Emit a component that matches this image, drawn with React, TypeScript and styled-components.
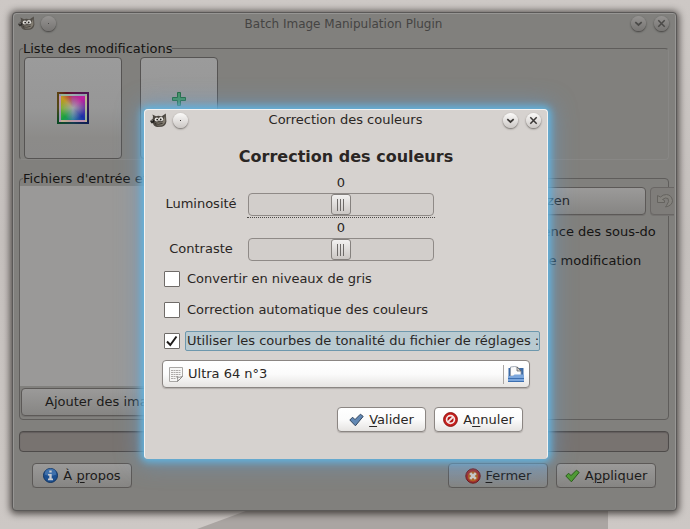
import React, { useState } from "react";
import styled, { createGlobalStyle, css } from "styled-components";

const GlobalStyle = createGlobalStyle`
  *, *::before, *::after { box-sizing: border-box; }
  body {
    margin: 0;
    font: 13px/16px "DejaVu Sans", Verdana, sans-serif;
    color: #2a2624;
  }
  button, input { font: inherit; color: inherit; }
`;

const Desktop = styled.div`
  position: relative;
  display: flex;
  min-height: 100vh;
  padding: 12px 13px 18px 12px;
  background: linear-gradient(#cdc8c5, #c5c0bd 45%, #cdc8c5);
  overflow: hidden;
`;

const Wallpaper = styled.svg`
  position: absolute;
  inset: auto 0 0 0;
  width: 100%;
  height: 24px;
`;

const MainWindow = styled.main`
  position: relative;
  flex: 1;
  min-width: 0;
  border: 1px solid #5b5958;
  border-radius: 4px;
  background: #81807d;
  color: #151413;
  box-shadow: inset 1px 1px 0 #979694, inset -1px 0 0 #979694, 0 1px 7px 2px rgba(40, 36, 34, 0.75);
`;

const TitleBar = styled.header<{ $dim?: boolean }>`
  display: flex;
  align-items: center;
  gap: 6px;
  height: 20px;
  padding: 0 6px 0 5px;
  ${(p) =>
    p.$dim &&
    css`
      height: 21px;
      padding-right: 7px;
      color: #454443;
    `}
`;

const WindowTitle = styled.h1<{ $small?: boolean }>`
  flex: 1;
  margin: 0;
  font-size: ${(p) => (p.$small ? 12 : 13)}px;
  font-weight: 400;
  line-height: 16px;
  text-align: center;
  white-space: nowrap;
`;

const RoundButton = styled.button<{ $dim?: boolean }>`
  display: grid;
  place-items: center;
  flex: none;
  width: 15px;
  height: 15px;
  padding: 0;
  border: 0;
  border-radius: 50%;
  color: ${(p) => (p.$dim ? "#4b4a48" : "#3b3836")};
  background: ${(p) => (p.$dim ? "linear-gradient(#959391, #777573)" : "linear-gradient(#fbfaf9, #ccc8c5)")};
  box-shadow: 0 1px 2px ${(p) => (p.$dim ? "#3f3d3c" : "#6d6966")};
`;

const WindowControls = styled.div`
  display: flex;
  gap: 8px;
`;

const WindowBody = styled.div`
  display: flex;
  flex-direction: column;
  margin-right: 2px;
  padding: 7px 5px 0 6px;
  overflow: hidden;
`;

const Frame = styled.fieldset<{ $faint?: boolean }>`
  min-width: 0;
  margin: 0 0 11px;
  padding: 0;
  border: 1px solid #5f5d5b;
  border-radius: 4px;
  ${(p) =>
    p.$faint &&
    css`
      padding: 1px 4px 0;
      border-right-color: #888785;
      border-bottom-color: #888785;
    `}
`;

const Legend = styled.legend<{ $inset?: boolean }>`
  margin-left: ${(p) => (p.$inset ? 3 : -1)}px;
  padding: 0;
  line-height: 15px;
  white-space: nowrap;
`;

const StepList = styled.div`
  display: flex;
  gap: 18px;
`;

const StepButton = styled.button<{ $narrow?: boolean }>`
  display: grid;
  place-items: center;
  width: ${(p) => (p.$narrow ? 78 : 98)}px;
  height: 102px;
  padding: ${(p) => (p.$narrow ? "0 0 18px" : "0")};
  border: 1px solid #565453;
  border-radius: 4px;
  background: linear-gradient(#9b9b9b, #979797 50%, #8c8b89 80%, #8b8a89);
`;

const Swatch = styled.span`
  display: block;
  width: 32px;
  height: 32px;
  padding: 2px;
  background: conic-gradient(#5c1040, #45175c, #101c55 37%, #143a4c 50%, #0b4a22 63%, #504818, #5c4310 87%, #5c1020, #5c1040);
`;

const SwatchField = styled.span`
  display: block;
  height: 28px;
  border: 2px solid rgba(190, 185, 182, 0.75);
  background:
    radial-gradient(circle, rgba(160, 162, 168, 1), rgba(155, 160, 165, 0) 70%),
    conic-gradient(#b0308a, #c020a0 12%, #6a3aa5 25%, #1830a8 37%, #3080a0 50%, #18a040 62%, #80b030 75%, #c09820 87%, #b84040 95%, #b0308a);
`;

const FilesGrid = styled.div`
  display: grid;
  grid-template-columns: minmax(0, 1fr) 196px;
`;

const FileColumn = styled.div`
  display: flex;
  flex-direction: column;
  gap: 2px;
  padding-bottom: 3px;
`;

const FileList = styled.div`
  height: 200px;
  background: #9a9998;
`;

const dimButton = css`
  border: 1px solid #5c5957;
  border-radius: 4px;
  background: linear-gradient(#9b9a99, #868583);
  box-shadow: 0 1px 0 #757371;
  color: #1c1b1a;
  white-space: nowrap;
`;

const AddButton = styled.button`
  ${dimButton}
  width: 220px;
  height: 28px;
  margin-left: 1px;
  padding: 0 23px;
  text-align: left;
`;

const OptionsColumn = styled.div`
  display: flex;
  flex-direction: column;
  gap: 4px;
  min-width: 0;
  padding-top: 1px;
`;

const FolderRow = styled.div`
  display: flex;
  gap: 4px;
  width: 208px;
`;

const FolderButton = styled.button`
  ${dimButton}
  flex: none;
  width: 174px;
  height: 28px;
  padding: 0 0 0 74px;
  text-align: left;
`;

const UndoButton = styled.button`
  ${dimButton}
  display: grid;
  place-items: center;
  width: 30px;
  height: 28px;
  padding: 0;
  border-color: #6a6765;
  background: #7f7d7a;
`;

const FolderOption = styled.label`
  display: flex;
  align-items: center;
  justify-content: space-between;
  width: 181px;
  height: 25px;
  white-space: nowrap;

  input { flex: none; margin: 0; width: 14px; height: 14px; }
  span { flex: none; min-width: 153px; }
`;

const Progress = styled.div`
  height: 21px;
  margin: 0 0 11px;
  border: 1px solid #4e4b4a;
  border-radius: 4px;
  background: #787370;
  box-shadow: inset 0 1px 1px #625e5c;
`;

const Actions = styled.div<{ $dialog?: boolean }>`
  display: flex;
  gap: 8px;
  padding: ${(p) => (p.$dialog ? "0 7px 0 0" : "0 13px")};
  ${(p) => p.$dialog && "justify-content: flex-end;"}
`;

const brightButton = css`
  border: 1px solid #8b8683;
  border-radius: 4px;
  background: linear-gradient(#ffffff, #fbfbfb 50%, #e6e4e2);
  box-shadow: 0 1px 1px #b3aeab;
`;

const ActionButton = styled.button<{ $kind: "dim" | "focus" | "bright"; $first?: boolean }>`
  display: flex;
  align-items: center;
  justify-content: center;
  gap: 5px;
  width: ${(p) => (p.$kind === "bright" ? 89 : 100)}px;
  height: 25px;
  padding: 0;
  white-space: nowrap;
  ${(p) => (p.$kind === "bright" ? brightButton : dimButton)}
  ${(p) => p.$kind === "focus" && "background: linear-gradient(#8494a4, #858583);"}
  ${(p) => p.$first && "margin-right: auto;"}

  u { text-decoration-thickness: 1px; text-underline-offset: 2px; }
`;

const Dialog = styled.section`
  position: absolute;
  top: 109px;
  left: 144px;
  right: 142px;
  padding-bottom: 26px;
  border: 1px solid #f4f3f2;
  border-bottom-color: #d6d2cf;
  border-radius: 4px;
  background: #d6d2cf;
  box-shadow: 0 0 7px 3px #62b4de, 0 0 22px 5px rgba(100, 155, 205, 0.6);
`;

const DialogBody = styled.form`
  display: flex;
  flex-direction: column;
  padding: 0 17px;
`;

const Heading = styled.h2`
  margin: 16px 0 7px;
  font-size: 16px;
  line-height: 22px;
  text-align: center;
`;

const ScaleRow = styled.div`
  display: grid;
  grid-template-columns: 78px minmax(0, 1fr);
  grid-template-rows: 18px 25px;
  column-gap: 7px;
  height: 45px;
  padding-right: 95px;
`;

const ScaleValue = styled.output`
  grid-column: 2;
  line-height: 16px;
  text-align: center;
`;

const ScaleLabel = styled.label`
  line-height: 22px;
  text-align: center;
`;

const Range = styled.input`
  display: block;
  appearance: none;
  width: 100%;
  height: 23px;
  margin: 0;
  border: 1px solid #8f8a87;
  border-radius: 4px;
  background: #d2cecb;
  outline: none;

  &::-webkit-slider-thumb {
    appearance: none;
    width: 20px;
    height: 21px;
    border: 1px solid #85817e;
    border-radius: 3px;
    background:
      linear-gradient(#6d6a68, #6d6a68) 5px 4px / 1px 12px no-repeat,
      linear-gradient(#6d6a68, #6d6a68) 8px 4px / 1px 12px no-repeat,
      linear-gradient(#6d6a68, #6d6a68) 11px 4px / 1px 12px no-repeat,
      linear-gradient(#f2f1f0, #cbc7c4);
  }
`;

const RangeFrame = styled.div<{ $focused?: boolean }>`
  padding: 0 1px;
  ${(p) => p.$focused && "border-bottom: 1px dotted #4c4947;"}
`;

const Checks = styled.div`
  display: flex;
  flex-direction: column;
  gap: 11px;
  margin-top: 4px;
`;

const CheckRow = styled.label`
  display: flex;
  align-items: center;
  gap: 5px;
  height: 20px;
  padding-left: 2px;
  white-space: nowrap;
`;

const CheckText = styled.span<{ $active?: boolean }>`
  flex: none;
  padding: 1px 0 1px 1px;
  border: 1px solid ${(p) => (p.$active ? "#6e98ad" : "transparent")};
  border-radius: 2px;
  background: ${(p) => (p.$active ? "#b9cad1" : "none")};
`;

const CheckBox = styled.span`
  display: grid;
  flex: none;
  width: 16px;
  height: 16px;

  > * { grid-area: 1 / 1; }

  input {
    appearance: none;
    width: 16px;
    height: 16px;
    margin: 0;
    border: 1px solid #6f6b68;
    border-radius: 1px;
    background: #fff;
  }

  svg { visibility: hidden; pointer-events: none; z-index: 1; }
  input:checked + svg { visibility: visible; }
`;

const FilePicker = styled.button`
  ${brightButton}
  display: flex;
  align-items: center;
  gap: 4px;
  height: 28px;
  margin: 9px 0 19px;
  padding: 0 5px;
  text-align: left;

  > span { flex: 1; }
`;

const PickerIcon = styled.i`
  display: flex;
  align-items: center;
  height: 19px;
  padding-left: 4px;
  border-left: 1px solid #aaa6a3;
`;

function Wilber({ dim }: { dim?: boolean }) {
  return (
    <svg width="17" height="15" viewBox="0 0 17 15" opacity={dim ? 0.85 : 1}>
      <path d="M15.8 0.4 L16.4 8.6 Q15.8 12.8 12 13.8 L7 14 Q3.6 13.4 3 10.2 L1.6 10.4 Q0.3 9.6 0.6 7.2 L2.6 6.4 L3 3.4 L2.4 1.4 L6 3.2 Q8.4 2.4 11.4 3.4 Z" fill="#4c4741" />
      <path d="M15.2 2.4 L15.4 8.4 Q14.2 12 11 12.6 L7.4 12.6 L5 9.8 L12.4 9.2 Z" fill="#827c70" />
      <ellipse cx="6.8" cy="6.4" rx="2.1" ry="2" fill="#eceae5" />
      <ellipse cx="11" cy="6.2" rx="2.2" ry="2.1" fill="#eceae5" />
      <circle cx="7.2" cy="6.6" r="0.9" fill="#171513" />
      <circle cx="10.7" cy="6.5" r="0.9" fill="#171513" />
      <ellipse cx="2.4" cy="8.2" rx="1.8" ry="1.6" fill="#1d1b19" />
      <circle cx="2" cy="7.7" r="0.6" fill="#b9b6b0" />
      <path d="M5 10.6 Q8 12 12.6 10.4" fill="none" stroke="#26221e" strokeWidth="0.8" />
    </svg>
  );
}

function Chevron() {
  return (
    <svg width="9" height="9" viewBox="0 0 9 9" fill="none" stroke="currentColor" strokeWidth="1.7">
      <path d="M1.3 3.2 L4.5 6 L7.7 3.2" />
    </svg>
  );
}

function Cross() {
  return (
    <svg width="9" height="9" viewBox="0 0 9 9" fill="none" stroke="currentColor" strokeWidth="1.5">
      <path d="M1.3 1.3 L7.7 7.7 M7.7 1.3 L1.3 7.7" />
    </svg>
  );
}

function Dot() {
  return (
    <svg width="9" height="9" viewBox="0 0 9 9">
      <rect x="4" y="4" width="1" height="1" fill="currentColor" />
    </svg>
  );
}

function Tick({ fill, stroke }: { fill: string; stroke: string }) {
  return (
    <svg width="15" height="14" viewBox="0 0 15 14">
      <path d="M0.8 7 L3.6 4.2 L6 6.6 L11.4 1.2 L14.2 3.4 L6.4 12.8 Z" fill={fill} stroke={stroke} strokeWidth="1" strokeLinejoin="round" />
    </svg>
  );
}

function Plus() {
  return (
    <svg width="14" height="14" viewBox="0 0 14 14">
      <path d="M5.5 0.5h3v5h5v3h-5v5h-3v-5h-5v-3h5z" fill="#43925f" stroke="#1f6a3c" strokeLinejoin="round" />
    </svg>
  );
}

function Info() {
  return (
    <svg width="15" height="15" viewBox="0 0 15 15">
      <circle cx="7.5" cy="7.5" r="7" fill="#1c4f90" stroke="#123461" />
      <path d="M1.5 6.5a6 6 0 0 1 12 0q-6 2.5-12 0" fill="#3f70ab" />
      <path d="M6.3 2.5h2.4v2H6.3z M5 6h3.7v4.6h1.3v1.6H5v-1.6h1.3V7.6H5z" fill="#c8cbd0" />
    </svg>
  );
}

function Forbidden() {
  return (
    <svg width="15" height="15" viewBox="0 0 15 15">
      <circle cx="7.5" cy="7.5" r="6.9" fill="#c9211e" stroke="#8d1513" />
      <circle cx="7.5" cy="7.5" r="3.9" fill="#b31614" stroke="#f6e9e8" strokeWidth="1.7" />
      <path d="M4.8 10.2 L10.2 4.8" stroke="#f6e9e8" strokeWidth="1.9" />
    </svg>
  );
}

function CloseBadge() {
  return (
    <svg width="16" height="16" viewBox="0 0 16 16">
      <circle cx="8" cy="8" r="7.2" fill="#a32a2a" stroke="#6b1a1a" />
      <circle cx="8" cy="8.5" r="5" fill="#b0601f" />
      <path d="M5.2 5.2 L10.8 10.8 M10.8 5.2 L5.2 10.8" stroke="#d0cbc8" strokeWidth="2.6" />
    </svg>
  );
}

function Undo() {
  return (
    <svg width="18" height="16" viewBox="0 0 18 16">
      <path
        d="M1.5 2.5V9.5H8.5V7.5L6.5 6.5Q9.5 4 12 5.5Q14 8 10.5 12.5L9.5 14Q16.5 12.5 16.5 7.5Q15.5 2 10.5 1.5Q7 1.5 4.5 4Z"
        fill="#84827d"
        stroke="#65635f"
      />
    </svg>
  );
}

function Note() {
  return (
    <svg width="16" height="17" viewBox="0 0 16 17">
      <path d="M1.5 1.5h13v9l-5 5h-8z" fill="#f6f6f5" stroke="#a9a7a5" />
      <path d="M3 4.5h10M3 6.5h10M3 8.5h10M3 10.5h7M3 12.5h5" stroke="#aeacaa" strokeDasharray="2 0.5" />
      <path d="M14.5 10.5l-5 5q1-2.5-0.5-4.5q2.5 0.8 5.5-0.5z" fill="#fff" stroke="#8b8987" />
    </svg>
  );
}

function OpenFolder() {
  return (
    <svg width="16" height="16" viewBox="0 0 16 16">
      <path d="M0.5 2h15v13h-15z" fill="#3c6aa5" />
      <path d="M2.5 10V1q4.5-1 7 0l3.5 4v5z" fill="#fafafa" stroke="#8b95a3" strokeWidth="0.8" />
      <path d="M9 1v4h4z" fill="#d2d2d2" stroke="#555" strokeWidth="0.7" />
      <path d="M0 10h5l1.5-1.5H16V15.5H0z" fill="#7ba6dc" />
      <path d="M0 12.5h16M0 15.5h16" stroke="#3d6fb0" />
    </svg>
  );
}

function Check({ label, active, defaultChecked }: { label: string; active?: boolean; defaultChecked?: boolean }) {
  return (
    <CheckRow>
      <CheckBox>
        <input type="checkbox" defaultChecked={defaultChecked} />
        <svg width="16" height="16" viewBox="0 0 16 16" fill="none" stroke="#1e1b1a" strokeWidth="2">
          <path d="M3 8.5 L6.3 12 L12.5 3.5" />
        </svg>
      </CheckBox>
      <CheckText $active={active}>{label}</CheckText>
    </CheckRow>
  );
}

function Scale({ id, label, focused }: { id: string; label: string; focused?: boolean }) {
  const [value, setValue] = useState(0);
  return (
    <ScaleRow>
      <ScaleValue htmlFor={id}>{value}</ScaleValue>
      <ScaleLabel htmlFor={id}>{label}</ScaleLabel>
      <RangeFrame $focused={focused}>
        <Range id={id} type="range" min={-100} max={100} value={value} onChange={(e) => setValue(Number(e.target.value))} />
      </RangeFrame>
    </ScaleRow>
  );
}

function Controls({ dim }: { dim?: boolean }) {
  return (
    <WindowControls>
      <RoundButton $dim={dim} type="button" aria-label="Réduire"><Chevron /></RoundButton>
      <RoundButton $dim={dim} type="button" aria-label="Fermer"><Cross /></RoundButton>
    </WindowControls>
  );
}

export default function App() {
  return (
    <Desktop>
      <GlobalStyle />
      <Wallpaper viewBox="0 0 690 24" preserveAspectRatio="none">
        <path d="M197 24 L262 0 H608 V24 Z" fill="#aaa5a2" />
      </Wallpaper>
      <MainWindow>
        <TitleBar $dim>
          <Wilber dim />
          <RoundButton $dim type="button" aria-label="Menu"><Dot /></RoundButton>
          <WindowTitle $small>Batch Image Manipulation Plugin</WindowTitle>
          <Controls dim />
        </TitleBar>
        <WindowBody>
          <Frame $faint>
            <Legend>Liste des modifications</Legend>
            <StepList>
              <StepButton type="button" aria-label="Couleurs"><Swatch><SwatchField /></Swatch></StepButton>
              <StepButton $narrow type="button" aria-label="Ajouter"><Plus /></StepButton>
            </StepList>
          </Frame>
          <Frame>
            <Legend $inset>Fichiers d'entrée et</Legend>
            <FilesGrid>
              <FileColumn>
                <FileList />
                <AddButton type="button">Ajouter des images</AddButton>
              </FileColumn>
              <OptionsColumn>
                <FolderRow>
                  <FolderButton type="button">zen</FolderButton>
                  <UndoButton type="button" aria-label="Rétablir"><Undo /></UndoButton>
                </FolderRow>
                <FolderOption><input type="checkbox" /><span>arborescence des sous-do</span></FolderOption>
                <FolderOption><input type="checkbox" /><span>dates de modification</span></FolderOption>
              </OptionsColumn>
            </FilesGrid>
          </Frame>
          <Progress role="progressbar" aria-valuenow={0} />
          <Actions>
            <ActionButton $kind="dim" $first type="button"><Info /><span>À <u>p</u>ropos</span></ActionButton>
            <ActionButton $kind="focus" type="button"><CloseBadge /><span><u>F</u>ermer</span></ActionButton>
            <ActionButton $kind="dim" type="button"><Tick fill="#4f9a35" stroke="#2c5c1c" /><span>A<u>p</u>pliquer</span></ActionButton>
          </Actions>
        </WindowBody>
      </MainWindow>
      <Dialog role="dialog" aria-labelledby="dialog-heading">
        <TitleBar>
          <Wilber />
          <RoundButton type="button" aria-label="Menu"><Dot /></RoundButton>
          <WindowTitle>Correction des couleurs</WindowTitle>
          <Controls />
        </TitleBar>
        <DialogBody onSubmit={(e) => e.preventDefault()}>
          <Heading id="dialog-heading">Correction des couleurs</Heading>
          <Scale id="brightness" label="Luminosité" focused />
          <Scale id="contrast" label="Contraste" />
          <Checks>
            <Check label="Convertir en niveaux de gris" />
            <Check label="Correction automatique des couleurs" />
            <Check label="Utiliser les courbes de tonalité du fichier de réglages :" active defaultChecked />
          </Checks>
          <FilePicker type="button">
            <Note />
            <span>Ultra 64 n°3</span>
            <PickerIcon><OpenFolder /></PickerIcon>
          </FilePicker>
          <Actions $dialog>
            <ActionButton $kind="bright" type="submit"><Tick fill="#6288b4" stroke="#32465f" /><span><u>V</u>alider</span></ActionButton>
            <ActionButton $kind="bright" type="button"><Forbidden /><span>A<u>n</u>nuler</span></ActionButton>
          </Actions>
        </DialogBody>
      </Dialog>
    </Desktop>
  );
}
